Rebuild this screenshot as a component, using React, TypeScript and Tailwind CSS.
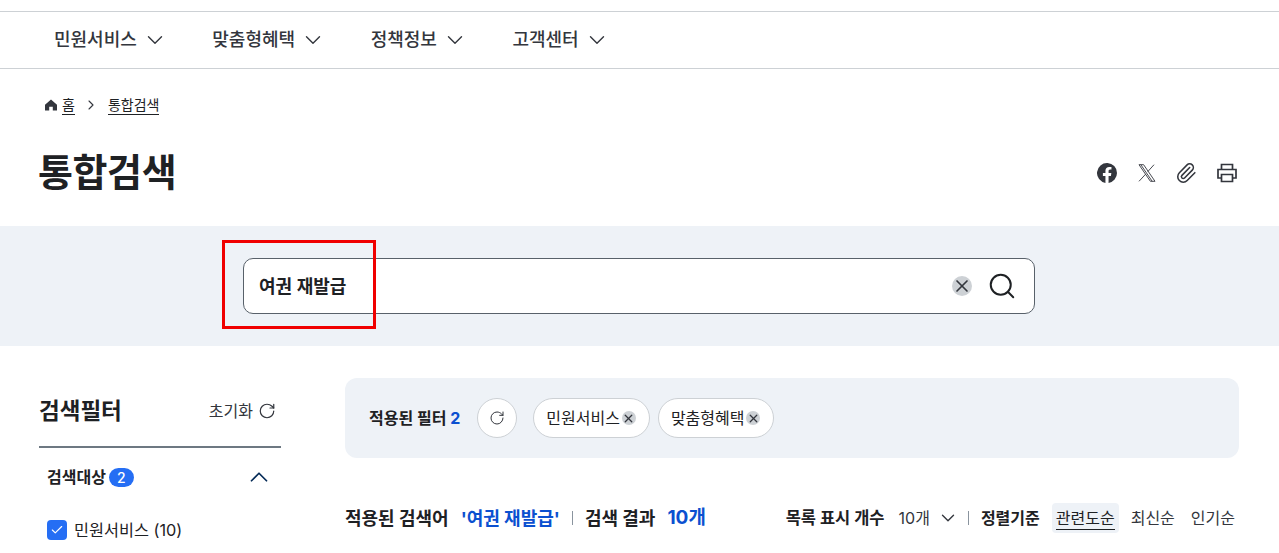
import { ChevronDown, ChevronRight, ChevronUp, Check, Paperclip, RotateCw, Search, X } from "lucide-react";

const font = { fontFamily: "Inter, 'Noto Sans CJK KR', sans-serif" };

const navItems = ["민원서비스", "맞춤형혜택", "정책정보", "고객센터"];

function ClearDot({ size }: { size: "sm" | "lg" }) {
  if (size === "lg") {
    return (
      <span className="flex h-5 w-5 items-center justify-center rounded-full bg-[#cdd1d5] text-[#33363d]">
        <X size={20} strokeWidth={2} />
      </span>
    );
  }
  return (
    <span className="flex h-[14px] w-[14px] items-center justify-center rounded-full bg-[#cdd1d5] text-[#33363d]">
      <X size={13} strokeWidth={2.4} />
    </span>
  );
}

function Chip({ label }: { label: string }) {
  return (
    <div className="flex h-10 items-center gap-[2px] rounded-full border border-[#cdd1d5] bg-white pl-[12px] pr-[13px] text-[16px] text-[#1e2124]">
      {label}
      <ClearDot size="sm" />
    </div>
  );
}

export default function App() {
  return (
    <div className="h-[553px] overflow-hidden bg-white text-[#1e2124]" style={font}>
      <nav className="mt-[11px] flex h-[58px] items-center gap-[44.5px] border-y border-[#cdd1d5] pl-[54px]">
        {navItems.map((item) => (
          <div key={item} className="flex items-center gap-[5px] text-[18px] font-medium text-[#33363d]">
            <span className="-mt-[1px]">{item}</span>
            <ChevronDown size={26} strokeWidth={1.3} />
          </div>
        ))}
      </nav>

      <div className="mt-[18px] flex h-[36px] items-center pl-[44px] text-[14px]">
        <svg width="14" height="14" viewBox="0 0 14 14" className="mr-[4px] text-[#33363d]">
          <path d="M7 1.5 1 6.8V12.5H5.2V8.8H8.8V12.5H13V6.8Z" fill="currentColor" />
        </svg>
        <span className="border-b border-[#1e2124] leading-[18px]">홈</span>
        <ChevronRight size={16} strokeWidth={1.6} className="mx-[8px] text-[#33363d]" />
        <span className="ml-[1px] border-b border-[#1e2124] leading-[18px]">통합검색</span>
      </div>

      <div className="mt-[15px] flex h-[68px] items-center justify-between pl-[38px] pr-[42px]">
        <h1 className="text-[38px] font-bold leading-none tracking-[-0.4px]">통합검색</h1>
        <div className="mt-[2px] flex items-center gap-[21px] text-[#33363d]">
          <svg width="20" height="20" viewBox="2 2 20 20" fill="currentColor">
            <path d="M22 12a10 10 0 1 0-11.56 9.88v-6.99H7.9V12h2.54V9.8c0-2.5 1.49-3.89 3.78-3.89 1.09 0 2.24.2 2.24.2v2.46h-1.26c-1.24 0-1.63.77-1.63 1.56V12h2.77l-.44 2.89h-2.33v6.99A10 10 0 0 0 22 12Z" />
          </svg>
          <svg width="18" height="18" viewBox="0 0 18 18" fill="none" stroke="currentColor" strokeWidth="0.9">
            <path d="M1 .7h4.6L17 17.3h-4.6Z" />
            <path d="M2.8 .7 14.2 17.3" />
            <path d="M16 .7 9.8 7.6M7.6 10.2 1 17.3" />
          </svg>
          <Paperclip size={22} strokeWidth={1.7} className="-ml-[2px] -mr-[1px]" />
          <svg width="20" height="20" viewBox="0 0 20 20" fill="none" stroke="currentColor" strokeWidth="1.7">
            <path d="M4.5 6V1.5h11V6" />
            <path d="M4.5 15H1V6.5h18V15h-3.5" />
            <path d="M4.5 11.5h11v7h-11Z" />
          </svg>
        </div>
      </div>

      <section className="relative mt-[20px] flex h-[120px] items-center justify-center bg-[#eef2f7]">
        <div className="mr-[1px] flex h-[56px] w-[792px] items-center justify-between rounded-[10px] border border-[#58616a] bg-white pl-[15px] pr-[17px]">
          <span className="text-[18px] font-semibold">여권 재발급</span>
          <div className="flex items-center gap-[15px]">
            <ClearDot size="lg" />
            <Search size={30} strokeWidth={1.6} className="text-[#1e2124]" />
          </div>
        </div>
        <div className="absolute left-[222px] top-[14px] h-[89px] w-[154px] border-[3px] border-[#f00000]" />
      </section>

      <div className="flex gap-[64px] pl-[39px] pr-[40px] pt-[32px]">
        <aside className="w-[242px] shrink-0">
          <div className="flex h-[70px] items-center justify-between border-b-2 border-[#6d7882] pb-[2px]">
            <h2 className="text-[22.5px] font-bold">검색필터</h2>
            <div className="flex items-center gap-[5px] pr-[5px] text-[16px] text-[#33363d]">
              초기화
              <RotateCw size={18} strokeWidth={1.6} />
            </div>
          </div>
          <div className="mt-[14px] flex h-[30px] items-center justify-between pl-[8px] pr-[7px]">
            <div className="flex items-center gap-[3px]">
              <span className="text-[16px] font-bold text-[#1e2124]">검색대상</span>
              <span className="flex h-[19px] w-[25px] items-center justify-center rounded-full bg-[#256ef4] text-[14px] font-medium text-white">
                2
              </span>
            </div>
            <ChevronUp size={30} strokeWidth={1.4} className="text-[#052b57]" />
          </div>
          <div className="mt-[26px] flex items-center gap-[7px] pl-[8px] text-[16.3px]">
            <span className="flex h-5 w-5 items-center justify-center rounded-[4px] bg-[#256ef4] text-white">
              <Check size={14} strokeWidth={2} />
            </span>
            민원서비스 (10)
          </div>
        </aside>

        <main className="flex-1">
          <div className="flex h-[80px] items-center rounded-[12px] bg-[#eef2f7] pl-[24px]">
            <span className="text-[16px] font-bold">
              적용된 필터 <span className="text-[#0b50d0]">2</span>
            </span>
            <span className="ml-[17px] flex h-10 w-10 items-center justify-center rounded-full border border-[#cdd1d5] bg-white text-[#33363d]">
              <RotateCw size={16} strokeWidth={1.5} />
            </span>
            <div className="ml-[16px] flex gap-[8px]">
              <Chip label="민원서비스" />
              <Chip label="맞춤형혜택" />
            </div>
          </div>

          <div className="mt-[45px] flex h-[30px] items-center justify-between">
            <div className="flex items-center text-[18px] font-bold">
              적용된 검색어
              <span className="ml-[12px] text-[#0b50d0]">'여권 재발급'</span>
              <span className="mx-[12px] h-[14px] w-px bg-[#8a949e]" />
              검색 결과
              <span className="ml-[12px] text-[19px] text-[#0b50d0]">10개</span>
            </div>
            <div className="flex items-center pr-[4px] text-[16px]">
              <span className="text-[16.5px] font-bold">목록 표시 개수</span>
              <span className="ml-[14px] text-[#33363d]">10개</span>
              <ChevronDown size={22} strokeWidth={1.5} className="ml-[7px] text-[#33363d]" />
              <span className="ml-[9px] mr-[12px] h-[14px] w-px bg-[#8a949e]" />
              <span className="font-bold">정렬기준</span>
              <span className="ml-[12px] flex h-[30px] items-center rounded-[4px] bg-[#eef2f7] px-[4px]">
                <span className="border-b border-[#1e2124] leading-[22px]">관련도순</span>
              </span>
              <span className="ml-[12px] text-[#33363d]">최신순</span>
              <span className="ml-[16px] text-[#33363d]">인기순</span>
            </div>
          </div>
        </main>
      </div>
    </div>
  );
}
